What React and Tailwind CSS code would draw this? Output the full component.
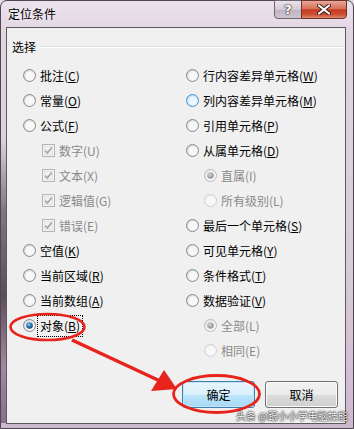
import React from 'react';

function Radio({ v = 'n' }) {
  const S = {
    n: { ring: '#8c8d8e', e: '#cfd0d1', c: '#f8f8f8' },
    h: { ring: '#4d93c9', e: '#a9d8f2', c: '#e9f6fd' },
    c: { ring: '#8c8d8e', e: '#cfd0d1', c: '#f8f8f8' },
    dc: { ring: '#b9b9b9', e: '#e2e2e2', c: '#f8f8f8' },
    d: { ring: '#d0d0d0', e: '#ececec', c: '#f8f8f8' },
  }[v];
  const id = 'rg-' + v;
  return (
    <svg width="13" height="13" viewBox="0 0 13 13" className="shrink-0">
      <defs>
        <radialGradient id={id} cx="0.55" cy="0.55" r="0.55">
          <stop offset="0" stopColor={S.c} />
          <stop offset="0.6" stopColor={S.c} />
          <stop offset="1" stopColor={S.e} />
        </radialGradient>
        <radialGradient id={id + 'd'} cx="0.4" cy="0.35" r="0.7">
          <stop offset="0" stopColor={v === 'c' ? '#8ccaf0' : '#d8d8d8'} />
          <stop offset="0.5" stopColor={v === 'c' ? '#2f78b4' : '#acacac'} />
          <stop offset="1" stopColor={v === 'c' ? '#123e66' : '#8f8f8f'} />
        </radialGradient>
      </defs>
      <circle cx="6.5" cy="6.5" r="6" fill={`url(#${id})`} stroke={S.ring} strokeWidth="1" />
      {(v === 'c' || v === 'dc') && <circle cx="6.5" cy="6.5" r="3.3" fill={`url(#${id}d)`} />}
    </svg>
  );
}

function Check() {
  return (
    <svg width="13" height="13" viewBox="0 0 13 13" className="shrink-0">
      <rect x="0.5" y="0.5" width="12" height="12" fill="#f4f4f4" stroke="#b4b4b4" />
      <rect x="2.5" y="2.5" width="8" height="8" fill="#f1f1f1" stroke="#e2e2e2" />
      <path d="M3.2 6.6 L5.4 9 L9.8 3.4" fill="none" stroke="#a6a6a6" strokeWidth="1.6" />
    </svg>
  );
}

function Row({ kind = 'n', text, k, indent = '', disabled = false, focus = false }) {
  return (
    <div className={`h-[25px] flex items-center gap-[4px] ${indent}`}>
      {kind === 'check' ? <Check /> : <Radio v={kind} />}
      <span
        className={`text-[12px] leading-[16px] whitespace-nowrap ${disabled ? 'text-[#8a8a8a]' : 'text-black'} ${
          focus ? 'outline outline-1 outline-dotted outline-black outline-offset-[2px]' : ''
        }`}
      >
        {text}(
        {disabled ? k : <span className="underline underline-offset-[1px]">{k}</span>})
      </span>
    </div>
  );
}

export default function App() {
  return (
    <div className="relative w-[354px] h-[429px] overflow-hidden bg-[#e4d9e4] font-['Noto_Sans_CJK_SC',sans-serif]">
      <div className="flex flex-col h-full rounded-t-[7px] border border-[#4f4650] bg-[linear-gradient(180deg,#ebe2ec_0%,#e1d5e2_8%,#d9cbda_60%,#cdb9cf_100%)]">
        <div className="h-[26px] flex items-start justify-between">
          <span className="ml-[7px] mt-[4px] text-[12px] leading-[18px] text-black [text-shadow:0_0_6px_#fff]">定位条件</span>
          <div className="flex mr-[6px] -mt-[1px]">
            <div className="w-[28px] h-[19px] rounded-bl-[4px] border border-[#6d6470] bg-[linear-gradient(180deg,#ebe3ec_0%,#d4cad6_50%,#bfb3c2_51%,#cfc4d1_100%)] flex items-center justify-center">
              <span className="text-[13px] leading-[13px] font-bold text-white font-['DejaVu_Sans',sans-serif] [text-shadow:0_0_1px_#333,0_0_1px_#333,0_0_2px_#333]">?</span>
            </div>
            <div className="w-[46px] h-[19px] -ml-[1px] rounded-br-[4px] border border-[#6a3530] bg-[linear-gradient(180deg,#e9a898_0%,#d8705a_45%,#c43b22_52%,#cf5034_80%,#e0886b_100%)] flex items-center justify-center">
              <svg width="14" height="11" viewBox="0 0 14 11">
                <path d="M2 1.5 L12 9.5 M12 1.5 L2 9.5" stroke="#3b1a18" strokeWidth="4" strokeLinecap="round" />
                <path d="M2 1.5 L12 9.5 M12 1.5 L2 9.5" stroke="#ffffff" strokeWidth="2.2" strokeLinecap="round" />
              </svg>
            </div>
          </div>
        </div>
        <div className="ml-[5px] mr-[7px] h-[397px] border border-[#5d5a5f] bg-[#f0f0f0] flex flex-col">
          <div className="mt-[11px] h-[16px] flex items-center pl-[5px] pr-[1px]">
            <span className="text-[12px] leading-[16px] text-black">选择</span>
            <div className="flex-1 ml-[5px] h-[2px] border-t border-[#d5dfe5] border-b border-b-white" />
          </div>
          <div className="mt-[8px] flex">
            <div className="w-[179px] pl-[16px] flex flex-col">
              <Row text="批注" k="C" />
              <Row text="常量" k="O" />
              <Row text="公式" k="F" />
              <Row kind="check" text="数字" k="U" indent="pl-[19px]" disabled />
              <Row kind="check" text="文本" k="X" indent="pl-[19px]" disabled />
              <Row kind="check" text="逻辑值" k="G" indent="pl-[19px]" disabled />
              <Row kind="check" text="错误" k="E" indent="pl-[19px]" disabled />
              <Row text="空值" k="K" />
              <Row text="当前区域" k="R" />
              <Row text="当前数组" k="A" />
              <Row kind="c" text="对象" k="B" focus />
            </div>
            <div className="flex-1 flex flex-col">
              <Row text="行内容差异单元格" k="W" />
              <Row kind="h" text="列内容差异单元格" k="M" />
              <Row text="引用单元格" k="P" />
              <Row text="从属单元格" k="D" />
              <Row kind="dc" text="直属" k="I" indent="pl-[18px]" disabled />
              <Row kind="d" text="所有级别" k="L" indent="pl-[18px]" disabled />
              <Row text="最后一个单元格" k="S" />
              <Row text="可见单元格" k="Y" />
              <Row text="条件格式" k="T" />
              <Row text="数据验证" k="V" />
              <Row kind="dc" text="全部" k="L" indent="pl-[18px]" disabled />
              <Row kind="d" text="相同" k="E" indent="pl-[18px]" disabled />
            </div>
          </div>
          <div className="mt-[18px] flex justify-end gap-[10px] pr-[7px]">
            <button className="w-[73px] h-[27px] rounded-[3px] border border-[#3c7fb1] bg-[linear-gradient(180deg,#eaf6fd_0%,#d9f0fc_50%,#bee6fd_51%,#a7d9f5_100%)] shadow-[inset_0_0_0_1px_#c4e6f8] text-[12px] text-black">
              确定
            </button>
            <button className="w-[73px] h-[27px] rounded-[3px] border border-[#707070] bg-[linear-gradient(180deg,#f2f2f2_0%,#ebebeb_50%,#dddddd_51%,#cfcfcf_100%)] shadow-[inset_0_0_0_1px_#fcfcfc] text-[12px] text-black">
              取消
            </button>
          </div>
        </div>
      </div>
      <div className="absolute left-[1px] top-[140px] w-[5px] h-[283px] bg-[linear-gradient(180deg,rgba(60,40,60,0)_0%,rgba(60,40,60,0.55)_25%,rgba(40,25,40,0.7)_55%,rgba(120,80,110,0.5)_80%,rgba(90,60,90,0.6)_100%)]" />
      <svg className="absolute inset-0 pointer-events-none" width="354" height="429" viewBox="0 0 354 429">
        <ellipse cx="47.5" cy="327" rx="37" ry="13" fill="none" stroke="#e8231b" strokeWidth="2.6" />
        <ellipse cx="216.5" cy="394" rx="43" ry="18.5" fill="none" stroke="#e8231b" strokeWidth="2.8" />
        <path d="M72 340 L160 381" stroke="#e8231b" strokeWidth="3.5" />
        <polygon points="177,389 151,391 164,370" fill="#e8231b" />
      </svg>
      <div className="absolute left-[236px] top-[410px] text-[10px] leading-[12px] text-white whitespace-nowrap [text-shadow:0_0_2px_#000,0_0_1px_#000]">
        头条 @跟小小学电脑技能
      </div>
    </div>
  );
}
